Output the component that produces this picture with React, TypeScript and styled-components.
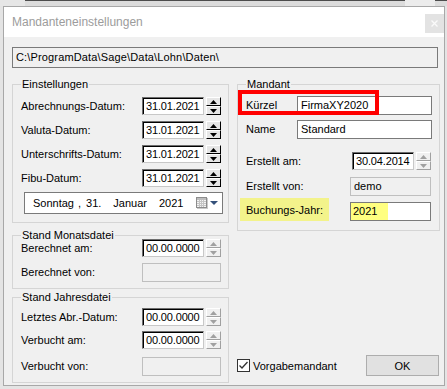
import React from "react";
import styled, { createGlobalStyle, css } from "styled-components";

const GlobalStyle = createGlobalStyle`
  * { box-sizing: border-box; }
  html, body { margin: 0; padding: 0; }
  body {
    background: #e4e4e4;
    font-family: "Liberation Sans", Arial, sans-serif;
    font-size: 11px;
    color: #000;
  }
`;

const Page = styled.div`
  width: 447px;
  height: 389px;
  display: flex;
  flex-direction: column;
  overflow: hidden;
`;

const BackStrip = styled.div`
  height: 6px;
  flex: none;
  display: flex;
  padding-left: 25px;
  background: #e6e6e6;
`;

const BackEdge = styled.div<{ $w?: number; $light?: boolean }>`
  ${(p) => (p.$w ? `width:${p.$w}px; flex:none;` : `flex:1;`)}
  ${(p) =>
    p.$light
      ? `background:#ececec;`
      : `border-top: 1px solid #4d4d4d; background:#dcdcdc;`}
`;

const Window = styled.div`
  flex: 1;
  margin: 0 2px 3px 3px;
  border: 1px solid #a8a8a8;
  background: #f0f0f0;
  display: flex;
  flex-direction: column;
`;

const TitleBar = styled.div`
  height: 30px;
  flex: none;
  background: #fff;
  display: flex;
  align-items: flex-start;
  padding-left: 8px;
`;

const Title = styled.div`
  flex: 1;
  font-size: 12px;
  line-height: 30px;
  color: #9c9c9c;
`;

const CloseBox = styled.div`
  width: 19px;
  height: 19px;
  margin-top: 7px;
  background: #e3e3e3;
  display: flex;
  align-items: center;
  justify-content: center;
`;

const Content = styled.div`
  flex: 1;
  display: flex;
  flex-direction: column;
  padding: 10px 0 2px 8px;
`;

const PathBox = styled.div`
  width: 426px;
  height: 21px;
  flex: none;
  border: 1px solid #7a7a7a;
  background: #f0f0f0;
  padding-left: 3px;
  line-height: 19px;
  letter-spacing: 0.15px;
  white-space: nowrap;
`;

const Columns = styled.div`
  display: grid;
  grid-template-columns: 217px 203px;
  column-gap: 8px;
  margin-top: 12px;
`;

const Column = styled.div`
  display: flex;
  flex-direction: column;
`;

const Group = styled.fieldset<{ $mt?: number; $pt: number; $pb: number }>`
  margin: ${(p) => p.$mt ?? 0}px 0 0 0;
  padding: ${(p) => p.$pt}px 7px ${(p) => p.$pb}px 8px;
  border: 1px solid #d5d5d5;
  min-width: 0;
`;

const Legend = styled.legend`
  padding: 0 1px;
  height: 8px;
  line-height: 8px;
  font-size: 11px;
`;

const Stack = styled.div`
  display: flex;
  flex-direction: column;
`;

const Row = styled.div<{ $mt?: number; $h?: number; $pr?: number }>`
  position: relative;
  height: ${(p) => p.$h ?? 18}px;
  margin-top: ${(p) => p.$mt ?? 0}px;
  padding-right: ${(p) => p.$pr ?? 0}px;
  display: flex;
  align-items: center;
`;

const Label = styled.span<{ $hl?: boolean }>`
  flex: 1;
  white-space: nowrap;
  line-height: 13px;
  ${(p) =>
    p.$hl &&
    css`
      flex: none;
      width: 89px;
      align-self: stretch;
      margin: -4px auto 0 -6px;
      padding: 2px 0 0 6px;
      background: #f3f38b;
      display: flex;
      align-items: center;
    `}
`;

const DateBox = styled.div`
  width: 62px;
  height: 18px;
  flex: none;
  background: #fff;
  border-style: solid;
  border-width: 1px;
  border-color: #6d6d6d #c8c8c8 #c8c8c8 #6d6d6d;
  box-shadow: inset 1px 1px 0 #000;
  padding-left: 3px;
  line-height: 16px;
  letter-spacing: -0.15px;
  white-space: nowrap;
  overflow: hidden;
`;

const Spinner = styled.div`
  width: 15px;
  height: 18px;
  margin-left: 2px;
  flex: none;
  display: flex;
  flex-direction: column;
`;

const SpinBtn = styled.div<{ $off?: boolean }>`
  flex: 1;
  display: flex;
  align-items: center;
  justify-content: center;
  background: ${(p) => (p.$off ? "#f0f0f0" : "#e6e6e6")};
  border: 1px solid;
  border-color: ${(p) =>
    p.$off ? "#fff #a0a0a0 #a0a0a0 #fff" : "#fff #000 #000 #fff"};
`;

const TextBox = styled.div<{ $w: number; $off?: boolean }>`
  width: ${(p) => p.$w}px;
  height: 19px;
  flex: none;
  border: 1px solid ${(p) => (p.$off ? "#bfbfbf" : "#7a7a7a")};
  background: ${(p) => (p.$off ? "#f0f0f0" : "#fff")};
  padding-left: 3px;
  line-height: 17px;
  white-space: nowrap;
`;

const YearBox = styled.div`
  width: 81px;
  height: 19px;
  flex: none;
  border: 1px solid #7a7a7a;
  background: #fff;
  line-height: 17px;
  white-space: nowrap;
  display: flex;
`;

const Selected = styled.span`
  background: #ffff80;
  padding: 0 11px 0 2px;
`;

const Callout = styled.div`
  position: absolute;
  left: -8px;
  top: -6px;
  width: 141px;
  height: 25px;
  border: 4px solid #ff0000;
  pointer-events: none;
`;

const DatePicker = styled.div`
  margin: 5px 0 0 3px;
  width: 199px;
  height: 22px;
  flex: none;
  border: 1px solid #7a7a7a;
  background: #fff;
  display: flex;
  align-items: center;
  padding: 0 4px 0 8px;
  white-space: nowrap;
`;

const DPart = styled.span<{ $ml?: number }>`
  margin-left: ${(p) => p.$ml ?? 0}px;
`;

const PickerIcons = styled.span`
  margin-left: auto;
  display: flex;
  align-items: center;
  gap: 2px;
`;

const BottomRow = styled.div`
  margin-top: auto;
  margin-bottom: 7px;
  height: 21px;
  display: flex;
  align-items: center;
`;

const CheckLabel = styled.label`
  display: flex;
  align-items: center;
  gap: 3px;
  white-space: nowrap;
`;

const OkButton = styled.button`
  margin-left: auto;
  margin-right: 1px;
  width: 73px;
  height: 21px;
  border: 1px solid #adadad;
  background: #e1e1e1;
  font: 11px "Liberation Sans", Arial, sans-serif;
  color: #000;
  padding: 0;
`;

const Arrow = ({ down, off }: { down?: boolean; off?: boolean }) => (
  <svg width="7" height="4" viewBox="0 0 7 4">
    <polygon
      points={down ? "0,0 7,0 3.5,4" : "0,4 7,4 3.5,0"}
      fill={off ? "#a0a0a0" : "#000"}
    />
  </svg>
);

const DateInput = ({ value, off }: { value: string; off?: boolean }) => (
  <>
    <DateBox>{value}</DateBox>
    <Spinner>
      <SpinBtn $off={off}>
        <Arrow off={off} />
      </SpinBtn>
      <SpinBtn $off={off}>
        <Arrow down off={off} />
      </SpinBtn>
    </Spinner>
  </>
);

const CalendarIcon = () => (
  <svg width="12" height="12" viewBox="0 0 12 12">
    <rect x="1" y="1" width="11" height="11" fill="#c9c9c9" />
    <rect x="0.5" y="0.5" width="10" height="10" fill="#f4f4f4" stroke="#8c8c8c" />
    <rect x="1" y="1" width="9" height="2" fill="#bdbdbd" />
    {[3.5, 5.5, 7.5].map((x) => (
      <line key={"v" + x} x1={x} y1="3" x2={x} y2="10" stroke="#c4c4c4" strokeWidth="1" />
    ))}
    {[4.5, 6.5, 8.5].map((y) => (
      <line key={"h" + y} x1="1" y1={y} x2="10" y2={y} stroke="#c4c4c4" strokeWidth="1" />
    ))}
  </svg>
);

const DropArrow = () => (
  <svg width="8" height="4" viewBox="0 0 8 4">
    <polygon points="0,0 8,0 4,4" fill="#34507a" />
  </svg>
);

const CloseIcon = () => (
  <svg width="7" height="7" viewBox="0 0 7 7">
    <path d="M0.5 0.5 L6.5 6.5 M6.5 0.5 L0.5 6.5" stroke="#fafafa" strokeWidth="1.3" />
  </svg>
);

const CheckIcon = () => (
  <svg width="13" height="13" viewBox="0 0 13 13">
    <rect x="0.5" y="0.5" width="12" height="12" fill="#fff" stroke="#333" />
    <polyline points="2.5,6.5 5,9 10.5,3" fill="none" stroke="#333" strokeWidth="1.3" />
  </svg>
);

export default function App() {
  return (
    <>
      <GlobalStyle />
      <Page>
        <BackStrip>
          <BackEdge $w={380} />
          <BackEdge $w={30} $light />
          <BackEdge />
        </BackStrip>
        <Window>
          <TitleBar>
            <Title>Mandanteneinstellungen</Title>
            <CloseBox>
              <CloseIcon />
            </CloseBox>
          </TitleBar>
          <Content>
            <PathBox>C:\ProgramData\Sage\Data\Lohn\Daten\</PathBox>
            <Columns>
              <Column>
                <Group $pt={9} $pb={8}>
                  <Legend>Einstellungen</Legend>
                  <Stack>
                    <Row>
                      <Label>Abrechnungs-Datum:</Label>
                      <DateInput value="31.01.2021" />
                    </Row>
                    <Row $mt={6}>
                      <Label>Valuta-Datum:</Label>
                      <DateInput value="31.01.2021" />
                    </Row>
                    <Row $mt={6}>
                      <Label>Unterschrifts-Datum:</Label>
                      <DateInput value="31.01.2021" />
                    </Row>
                    <Row $mt={6}>
                      <Label>Fibu-Datum:</Label>
                      <DateInput value="31.01.2021" />
                    </Row>
                    <DatePicker>
                      <DPart>Sonntag</DPart>
                      <DPart $ml={4}>,</DPart>
                      <DPart $ml={5}>31.</DPart>
                      <DPart $ml={12}>Januar</DPart>
                      <DPart $ml={12}>2021</DPart>
                      <PickerIcons>
                        <CalendarIcon />
                        <DropArrow />
                      </PickerIcons>
                    </DatePicker>
                  </Stack>
                </Group>

                <Group $mt={8} $pt={0} $pb={6}>
                  <Legend>Stand Monatsdatei</Legend>
                  <Stack>
                    <Row>
                      <Label>Berechnet am:</Label>
                      <DateInput value="00.00.0000" off />
                    </Row>
                    <Row $mt={6} $h={19}>
                      <Label>Berechnet von:</Label>
                      <TextBox $w={79} $off />
                    </Row>
                  </Stack>
                </Group>

                <Group $mt={4} $pt={7} $pb={6}>
                  <Legend>Stand Jahresdatei</Legend>
                  <Stack>
                    <Row>
                      <Label>Letztes Abr.-Datum:</Label>
                      <DateInput value="00.00.0000" off />
                    </Row>
                    <Row $mt={5}>
                      <Label>Verbucht am:</Label>
                      <DateInput value="00.00.0000" off />
                    </Row>
                    <Row $mt={8} $h={19}>
                      <Label>Verbucht von:</Label>
                      <TextBox $w={79} $off />
                    </Row>
                  </Stack>
                </Group>
              </Column>

              <Column>
                <Group $pt={8} $pb={9}>
                  <Legend>Mandant</Legend>
                  <Stack>
                    <Row $h={19}>
                      <Label>Kürzel</Label>
                      <TextBox $w={135}>FirmaXY2020</TextBox>
                      <Callout />
                    </Row>
                    <Row $mt={5} $h={19}>
                      <Label>Name</Label>
                      <TextBox $w={135}>Standard</TextBox>
                    </Row>
                    <Row $mt={13} $pr={1}>
                      <Label>Erstellt am:</Label>
                      <DateInput value="30.04.2014" off />
                    </Row>
                    <Row $mt={7} $h={19} $pr={1}>
                      <Label>Erstellt von:</Label>
                      <TextBox $w={81} $off>
                        demo
                      </TextBox>
                    </Row>
                    <Row $mt={6} $h={19} $pr={1}>
                      <Label $hl>Buchungs-Jahr:</Label>
                      <YearBox>
                        <Selected>2021</Selected>
                      </YearBox>
                    </Row>
                  </Stack>
                </Group>
                <BottomRow>
                  <CheckLabel>
                    <CheckIcon />
                    Vorgabemandant
                  </CheckLabel>
                  <OkButton>OK</OkButton>
                </BottomRow>
              </Column>
            </Columns>
          </Content>
        </Window>
      </Page>
    </>
  );
}
